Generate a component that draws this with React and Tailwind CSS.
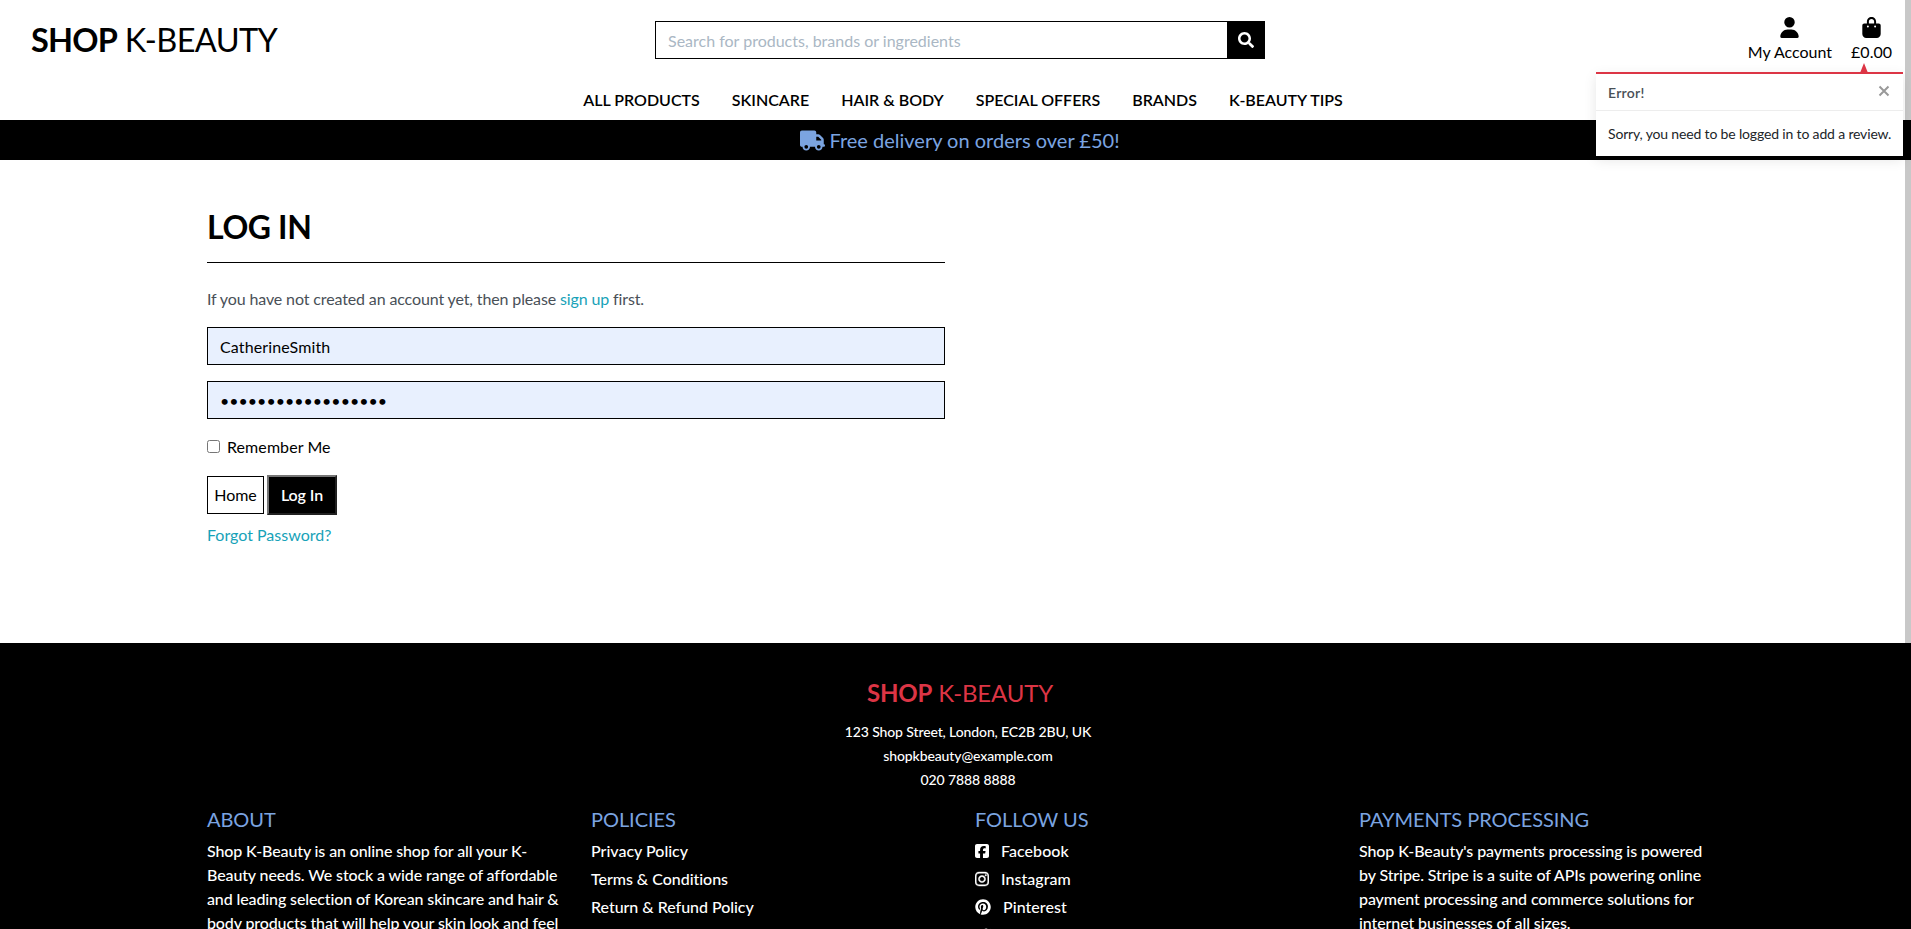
import {
  FaBagShopping,
  FaInstagram,
  FaPinterest,
  FaSquareFacebook,
  FaTruck,
  FaTwitter,
  FaUser,
} from "react-icons/fa6";
import { FaSearch } from "react-icons/fa";

const navItems = [
  "ALL PRODUCTS",
  "SKINCARE",
  "HAIR & BODY",
  "SPECIAL OFFERS",
  "BRANDS",
  "K-BEAUTY TIPS",
];

function Header() {
  return (
    <header className="h-[120px]">
      <div className="flex h-[80px] items-start">
        <h1 className="w-[655px] pl-[31px] pt-[20px] text-[32.5px] leading-[40px] tracking-[-0.6px] whitespace-nowrap">
          <strong className="font-bold tracking-[-0.8px]">SHOP</strong> K-BEAUTY
        </h1>
        <form className="mt-[21px] flex h-[38px] w-[610px]">
          <input
            className="h-full min-w-0 flex-1 border border-r-0 border-black px-3 pt-[1px] text-base outline-none placeholder:text-[#aab7c4]"
            placeholder="Search for products, brands or ingredients"
          />
          <button type="button" className="flex w-[38px] items-center justify-center bg-black text-white">
            <FaSearch size={16} />
          </button>
        </form>
        <div className="flex w-[646px] justify-end gap-[19px] pr-[19px] pt-[17px]">
          <a className="flex flex-col items-center">
            <FaUser size={21} />
            <span className="mt-[2px] leading-6">My Account</span>
          </a>
          <a className="flex flex-col items-center">
            <FaBagShopping size={21} />
            <span className="mt-[2px] leading-6">£0.00</span>
          </a>
        </div>
      </div>
      <nav className="flex h-[40px] justify-center gap-8 pt-[8px] pl-[6px]">
        {navItems.map((item) => (
          <a key={item} className="leading-6 font-semibold">{item}</a>
        ))}
      </nav>
    </header>
  );
}

function Toast() {
  return (
    <div className="absolute top-[72px] left-[1596px] h-[84px] w-[307px] border-t-2 border-[#dc3545] bg-white text-sm shadow-[0_4px_12px_rgba(0,0,0,0.1)]">
      <svg className="absolute -top-[11px] left-[264px]" width="8" height="10" viewBox="0 0 8 10">
        <path d="M4 0L8 10H0Z" fill="#dc3545" />
      </svg>
      <div className="flex h-[37px] items-center border-b border-[#ededed] pl-3 pr-[13px] pt-[2px]">
        <strong className="flex-1 font-semibold tracking-[0.25px] text-[#495057]">Error!</strong>
        <svg className="mb-[4px]" width="12" height="12" viewBox="0 0 12 12">
          <path d="M1.5 1.5L10.5 10.5M10.5 1.5L1.5 10.5" stroke="#999" strokeWidth="2" />
        </svg>
      </div>
      <p className="px-3 pt-[12px] leading-[21px] tracking-[-0.16px] whitespace-nowrap text-[#212529]">
        Sorry, you need to be logged in to add a review.
      </p>
    </div>
  );
}

function LoginForm() {
  return (
    <main className="h-[483px] pl-[207px] pt-[47px]">
      <div className="w-[738px]">
        <h2 className="h-[56px] border-b border-black text-[32px] leading-[40px] font-bold tracking-[-0.4px]">LOG IN</h2>
        <p className="mt-[24px] leading-6 tracking-[-0.13px] text-[#495057]">
          If you have not created an account yet, then please <a className="text-[#17a2b8]">sign up</a> first.
        </p>
        <input
          className="mt-[16px] block h-[38px] w-full border border-black bg-[#e8f0fe] px-3 pt-[1px] tracking-[0.12px] outline-none"
          defaultValue="CatherineSmith"
        />
        <input
          type="password"
          className="mt-[16px] block h-[38px] w-full border border-black bg-[#e8f0fe] px-3 pt-[1px] outline-none"
          defaultValue="abcdefghijklmnopqr"
        />
        <label className="mt-[15px] flex h-[24px] items-center">
          <input type="checkbox" className="mr-[7px] size-[13px]" />
          <span className="pt-[1px] tracking-[0.08px]">Remember Me</span>
        </label>
        <div className="mt-[17px] flex items-center gap-[3px]">
          <button type="button" className="h-[38px] w-[57px] border border-black">Home</button>
          <button type="button" className="h-[40px] w-[70px] border-2 border-t-[#767676] border-l-[#767676] border-r-[#212121] border-b-[#212121] bg-black font-semibold tracking-[-0.1px] text-white">
            Log In
          </button>
        </div>
        <a className="mt-[8px] block leading-6 text-[#17a2b8]">Forgot Password?</a>
      </div>
    </main>
  );
}

const headingClass = "mb-[8px] text-[20px] leading-6 font-normal tracking-[-0.06px] text-[#7ba4e0]";

const socials = [
  { name: "Facebook", icon: <FaSquareFacebook className="h-[16px] w-[14px]" /> },
  { name: "Instagram", icon: <FaInstagram className="h-[16px] w-[14px]" strokeWidth={14} stroke="currentColor" /> },
  { name: "Pinterest", icon: <FaPinterest className="size-[16px]" /> },
  { name: "Twitter", icon: <FaTwitter className="size-[16px]" /> },
];

function Footer() {
  return (
    <footer className="h-[286px] overflow-hidden bg-black pt-[35px] font-medium text-white">
      <h2 className="text-center text-[24px] leading-[30px] font-normal tracking-[-0.18px] text-[#dc3545]">
        <strong className="font-bold">SHOP</strong> K-BEAUTY
      </h2>
      <address className="mt-[12px] pl-[16px] text-center text-sm leading-6 tracking-[-0.12px] not-italic">
        <p>123 Shop Street, London, EC2B 2BU, UK</p>
        <p>shopkbeauty@example.com</p>
        <p>020 7888 8888</p>
      </address>
      <div className="ml-[207px] grid grid-cols-[384px_384px_384px_384px] pt-[15px]">
        <section className="w-[356px]">
          <h3 className={headingClass}>ABOUT</h3>
          <p className="leading-6 tracking-[-0.12px]">
            Shop K-Beauty is an online shop for all your K-Beauty needs. We stock a wide range of
            affordable and leading selection of Korean skincare and hair & body products that will
            help your skin look and feel
          </p>
        </section>
        <section>
          <h3 className={headingClass}>POLICIES</h3>
          <ul className="space-y-1 leading-6">
            <li>Privacy Policy</li>
            <li className="tracking-[-0.04px]">Terms & Conditions</li>
            <li className="tracking-[-0.04px]">Return & Refund Policy</li>
          </ul>
        </section>
        <section>
          <h3 className={headingClass}>FOLLOW US</h3>
          <ul className="space-y-1 leading-6 tracking-[0.05px]">
            {socials.map(({ name, icon }) => (
              <li key={name} className="flex items-center gap-[12px]">
                {icon}
                {name}
              </li>
            ))}
          </ul>
        </section>
        <section className="w-[354px]">
          <h3 className={headingClass}>PAYMENTS PROCESSING</h3>
          <p className="leading-6 tracking-[-0.1px]">
            Shop K-Beauty's payments processing is powered by Stripe. Stripe is a suite of APIs
            powering online payment processing and commerce solutions for internet businesses of
            all sizes.
          </p>
        </section>
      </div>
    </footer>
  );
}

export default function App() {
  return (
    <div className="relative h-[929px] w-[1911px] overflow-hidden bg-white font-['Lato',sans-serif] text-base text-black">
      <div className="absolute top-0 left-[1905px] h-[643px] w-[6px] bg-[#c8c8c8]" />
      <div className="relative w-[1920px]">
        <Header />
        <div className="flex h-[40px] items-center justify-center gap-[4px] bg-black text-[20px] text-[#7ba4e0]">
          <FaTruck size={25} />
          <span>Free delivery on orders over £50!</span>
        </div>
        <LoginForm />
        <Footer />
      </div>
      <Toast />
    </div>
  );
}
